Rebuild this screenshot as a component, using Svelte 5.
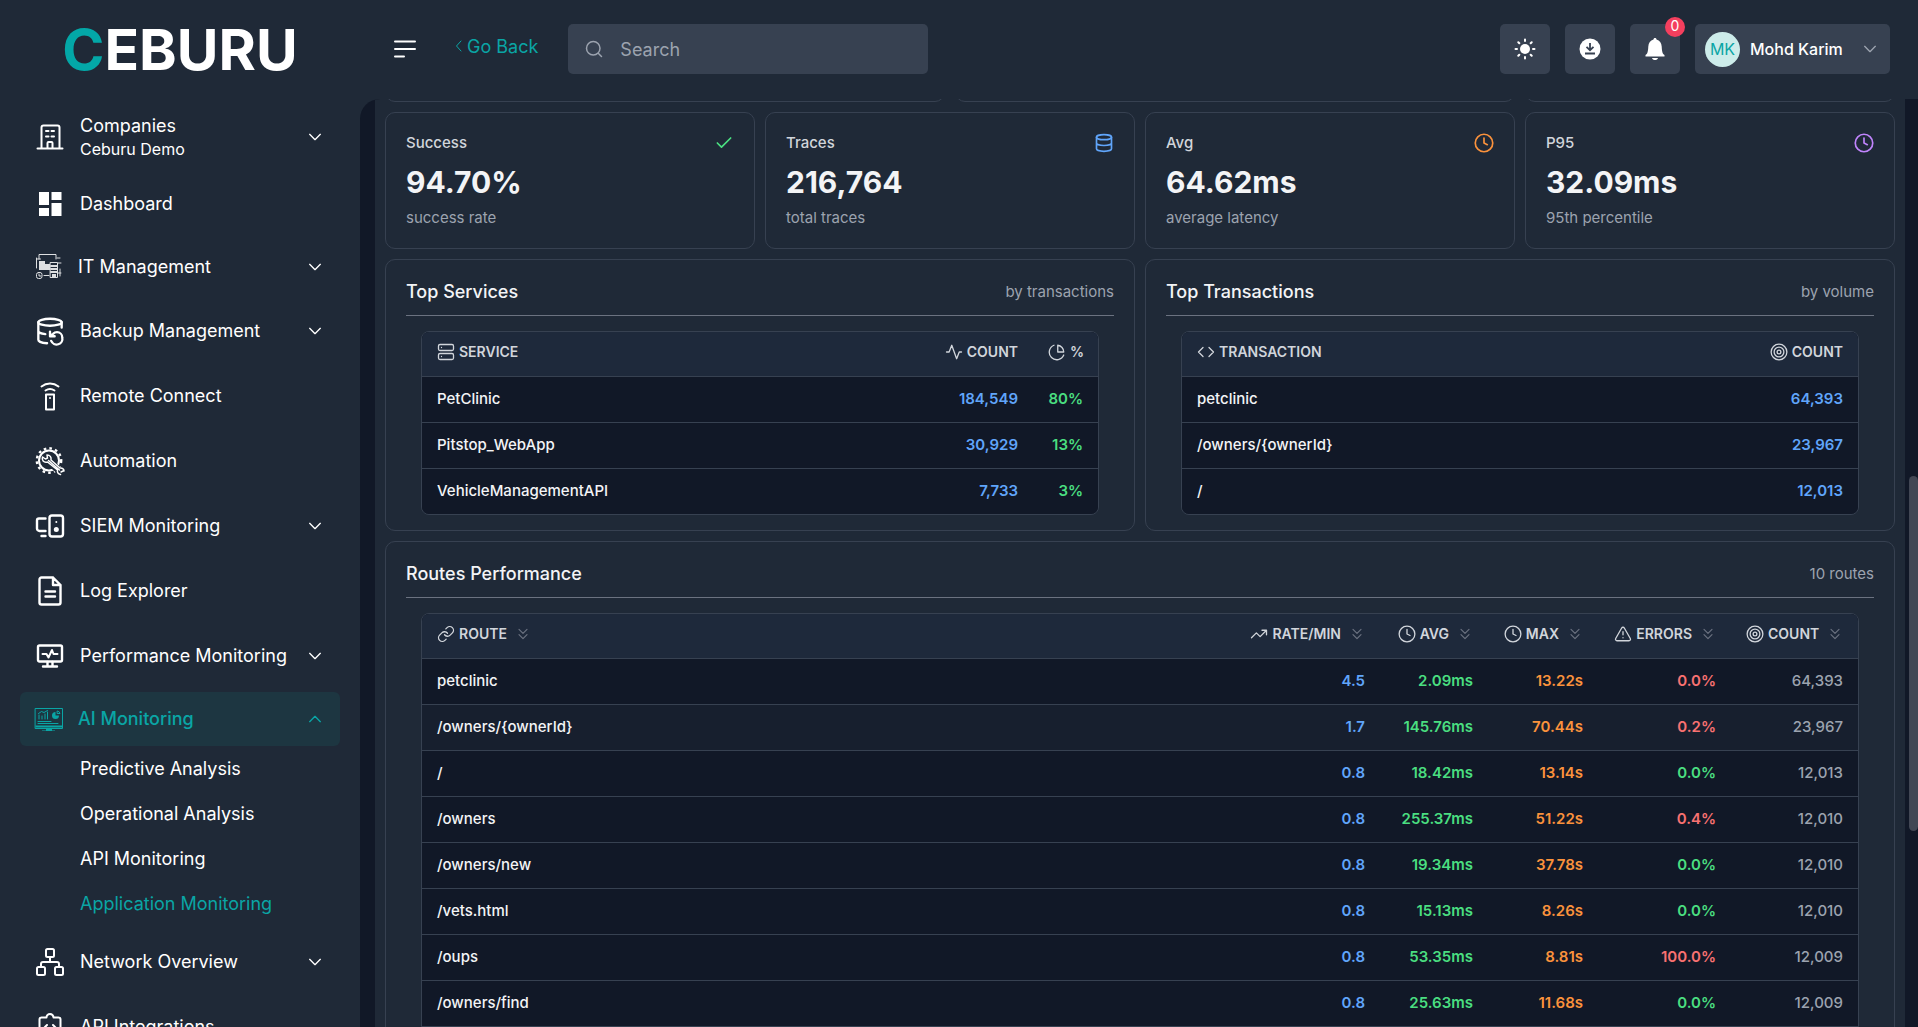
<script lang="ts">
  let search = '';
  let sortKey = '';

  const menu = [
    { label: 'Dashboard', icon: 'dashboard' },
    { label: 'IT Management', icon: 'it', image: true, expandable: true },
    { label: 'Backup Management', icon: 'backup', expandable: true },
    { label: 'Remote Connect', icon: 'remote' },
    { label: 'Automation', icon: 'automation' },
    { label: 'SIEM Monitoring', icon: 'siem', expandable: true },
    { label: 'Log Explorer', icon: 'log' },
    { label: 'Performance Monitoring', icon: 'performance', expandable: true },
    {
      label: 'AI Monitoring', icon: 'ai', image: true, expandable: true, active: true,
      children: ['Predictive Analysis', 'Operational Analysis', 'API Monitoring', 'Application Monitoring']
    },
    { label: 'Network Overview', icon: 'network', expandable: true },
    { label: 'API Integrations', icon: 'api' }
  ];

  const stats = [
    { label: 'Success', value: '94.70%', note: 'success rate', icon: 'check', tone: 'green' },
    { label: 'Traces', value: '216,764', note: 'total traces', icon: 'database', tone: 'blue' },
    { label: 'Avg', value: '64.62ms', note: 'average latency', icon: 'clock', tone: 'orange' },
    { label: 'P95', value: '32.09ms', note: '95th percentile', icon: 'clock', tone: 'purple' }
  ];

  const services = [
    { name: 'PetClinic', count: '184,549', share: '80%' },
    { name: 'Pitstop_WebApp', count: '30,929', share: '13%' },
    { name: 'VehicleManagementAPI', count: '7,733', share: '3%' }
  ];

  const transactions = [
    { name: 'petclinic', count: '64,393' },
    { name: '/owners/{ownerId}', count: '23,967' },
    { name: '/', count: '12,013' }
  ];

  const columns = [
    { key: 'route', label: 'Route', icon: 'link' },
    { key: 'rate', label: 'Rate/min', icon: 'trend' },
    { key: 'avg', label: 'Avg', icon: 'clock' },
    { key: 'max', label: 'Max', icon: 'clock' },
    { key: 'errors', label: 'Errors', icon: 'alert' },
    { key: 'count', label: 'Count', icon: 'target' }
  ];

  const routes = [
    { name: 'petclinic', rate: '4.5', avg: '2.09ms', max: '13.22s', errors: '0.0%', failing: true, count: '64,393' },
    { name: '/owners/{ownerId}', rate: '1.7', avg: '145.76ms', max: '70.44s', errors: '0.2%', failing: true, count: '23,967', highlight: true },
    { name: '/', rate: '0.8', avg: '18.42ms', max: '13.14s', errors: '0.0%', count: '12,013' },
    { name: '/owners', rate: '0.8', avg: '255.37ms', max: '51.22s', errors: '0.4%', failing: true, count: '12,010' },
    { name: '/owners/new', rate: '0.8', avg: '19.34ms', max: '37.78s', errors: '0.0%', count: '12,010' },
    { name: '/vets.html', rate: '0.8', avg: '15.13ms', max: '8.26s', errors: '0.0%', count: '12,010' },
    { name: '/oups', rate: '0.8', avg: '53.35ms', max: '8.81s', errors: '100.0%', failing: true, count: '12,009' },
    { name: '/owners/find', rate: '0.8', avg: '25.63ms', max: '11.68s', errors: '0.0%', count: '12,009' }
  ];

  // 24x24 line icons
  const lineIcons: Record<string, string> = {
    check: '<path d="M20 6 9 17l-5-5"/>',
    database: '<ellipse cx="12" cy="5" rx="9" ry="3"/><path d="M3 5v14a9 3 0 0 0 18 0V5M3 12a9 3 0 0 0 18 0"/>',
    clock: '<circle cx="12" cy="12" r="10.5"/><path d="M12 6v6l4 2"/>',
    server: '<rect x="2" y="2" width="20" height="8" rx="2"/><rect x="2" y="14" width="20" height="8" rx="2"/><path d="M6 6h.01M6 18h.01"/>',
    activity: '<path d="M22 12h-3l-3.500 9L9 3l-3.500 9H2"/>',
    pie: '<path d="M21 12A9 9 0 0 0 13 3v9zM21 16A10 10 0 1 1 8 3"/>',
    code: '<path d="m16 18 6-6-6-6M8 6l-6 6 6 6"/>',
    target: '<circle cx="12" cy="12" r="10.500"/><circle cx="12" cy="12" r="6.500"/><circle cx="12" cy="12" r="2.500"/>',
    link: '<path d="M10 13a5 5 0 0 0 7.540.540l3-3a5 5 0 0 0-7.070-7.070l-1.720 1.710"/><path d="M14 11a5 5 0 0 0-7.540-.540l-3 3a5 5 0 0 0 7.070 7.070l1.710-1.710"/>',
    trend: '<path d="M22 7l-8.500 8.500-5-5L2 17M16 7h6v6"/>',
    alert: '<path d="m21.730 18-8-14a2 2 0 0 0-3.480 0l-8 14A2 2 0 0 0 4 21h16a2 2 0 0 0 1.730-3M12 9v4M12 17h.01"/>',
    sort: '<path d="m6 5 6 6 6-6M6 13l6 6 6-6"/>',
    down: '<path d="m4 8 8 8 8-8"/>',
    up: '<path d="m4 16 8-8 8 8"/>',
    left: '<path d="m16 2-9 10 9 10"/>',
    search: '<circle cx="11" cy="11" r="9"/><path d="m18 18 4 4"/>'
  };

  // 28x28 sidebar icons
  const menuIcons: Record<string, string> = {
    company: '<path d="M5.500 25V4.500a2 2 0 0 1 2-2h14a2 2 0 0 1 2 2V25M1.500 25.500h25M11.500 25v-5a1 1 0 0 1 1-1h3a1 1 0 0 1 1 1v5M10 8h2.500M15.500 8H18M10 13.500h2.500M15.500 13.500H18"/>',
    dashboard: '<path class="solid" d="M3 2h10v13H3zM3 18h10v8H3zM15.500 2h10v8h-10zM15.500 13h10v13h-10z"/>',
    it: '<g stroke-width="1" opacity="0.850"><path d="M4 6V1.500h17V6M1.500 5v10M1.500 6h4M25 5h-3M26 10h-3M26 20h-3M25 23v-7"/><rect class="solid" x="4" y="8" width="6" height="9"/><path class="solid" d="M10 11h5v6h-5z"/><rect x="15.500" y="9.500" width="7" height="15"/><path stroke-width="2" d="M16 13h6M16 16h6M16 19h6"/><path class="solid" d="M17 21h4v3h-4z"/><path d="M9 22.500h5"/><rect x="1.500" y="19.500" width="5.500" height="6" rx="2"/><path d="M4 21v2h2"/></g>',
    backup: '<g transform="scale(1.167)" stroke-width="2"><ellipse cx="12" cy="4.500" rx="10" ry="3"/><path d="M2 12a9 3 0 0 0 6 2.690M22 9V4.500M2 4.500v15a9 3 0 0 0 7.500 3M12 12.500v4h4M13 20.500a5 5 0 0 0 9.500-3 4.500 4.500 0 0 0-4.500-4.500c-1.330 0-2.540.540-3.410 1.410L12 16.500"/></g>',
    remote: '<path d="M5.500 4.500a14 14 0 0 1 17 0M9.500 8.500a8 8 0 0 1 9 0M10 12.500h8v15h-8zM14 16h.01"/>',
    automation: '<g transform="translate(-1 0)"><circle cx="14" cy="13.500" r="10"/><circle cx="14" cy="13.500" r="12.200" stroke-width="2.400" stroke-dasharray="2.600 3.150" stroke-linecap="butt"/><path class="halo" d="M11 12 27 26"/><path stroke-width="1.500" d="M7.500 10c-1 3 1 6 5 5l10 8c-.500 2 .500 4 3 4.500M7.500 10l3 2 2-1-.500-3c3 0 4.500 2 4 5l9 8c2-.500 4 1 4 3M13.500 13.500l11 9.500M28 24l-2 1"/></g>',
    siem: '<path stroke-width="2.400" d="M9.500 6.500H3a2 2 0 0 0-2 2v8a2.500 2.500 0 0 0 2.500 2.500h6M5.500 24h4"/><rect stroke-width="2.400" x="13.500" y="3.500" width="13.500" height="21" rx="2.500"/><path d="M20.300 10h.01"/><circle class="solid" cx="20.300" cy="17.500" r="2.500"/>',
    log: '<path stroke-width="2.400" d="M17 .500H5.500A2 2 0 0 0 3.500 2.500v23a2 2 0 0 0 2 2h17a2 2 0 0 0 2-2V8zM17 .500V8h7.500M9.500 14.500h9.500M9.500 19.500h9.500"/>',
    performance: '<g stroke-width="2.400"><rect x="2" y="3.500" width="24" height="16" rx="1.500"/><path d="M11.500 20v4M16.500 20v4M7 24.500h14"/></g><path d="M6.500 12h4l2 3.500 3.500-7.500 1.500 4h4"/>',
    ai: '<g stroke-width="1"><path d="M.500 3.500h27v20H.500z"/><path class="solid" d="M.500 20.500h27v2H.500zM11 23h6v2.500h3v.500H7v-.500h4z"/><path d="M4 14v-4M7 14v-3M10 14V9M12.500 14V7M3.500 8.500l3-2 2.500 1 3.500-2M3 16.500h13M3 18.500h20"/><path class="solid" d="M20.500 7a3.500 3.500 0 1 0 3.500 3.500h-3.500z"/><path d="M22.500 6a3 3 0 0 1 2.500 2.500h-2.500z"/></g>',
    network: '<rect x="10" y="1" width="8" height="8" rx="1.500"/><rect x="1" y="19" width="8" height="8" rx="1.500"/><rect x="19" y="19" width="8" height="8" rx="1.500"/><path d="M14 9v5M5 19v-3a2 2 0 0 1 2-2h14a2 2 0 0 1 2 2v3"/>',
    api: '<path d="M10.500 4.500h-5a2 2 0 0 0-2 2V28h21V6.500a2 2 0 0 0-2-2h-5a3.500 3.500 0 0 0-7 0zM11 12l-3.500 3.500L11 19M17 12l3.500 3.500L17 19"/>'
  };
</script>

{#snippet line(name: string, size: number)}
  <svg class="line" width={size} height={size} viewBox="0 0 24 24" aria-hidden="true">{@html lineIcons[name]}</svg>
{/snippet}

{#snippet menuIcon(name: string)}
  <svg class="menu-icon" width="28" height="28" viewBox="0 0 28 28" aria-hidden="true">{@html menuIcons[name]}</svg>
{/snippet}

<div class="layout">
  <aside class="sidebar">
    <a class="logo" href="#home"><span>C</span>EBURU</a>

    <nav>
      <button class="item company">
        {@render menuIcon('company')}
        <span class="name">Companies<small>Ceburu Demo</small></span>
        {@render line('down', 16)}
      </button>
      {#each menu as entry}
        <button class="item" class:image={entry.image} class:active={entry.active}>
          {@render menuIcon(entry.icon)}
          <span class="name">{entry.label}</span>
          {#if entry.expandable}
            {@render line(entry.active ? 'up' : 'down', 16)}
          {/if}
        </button>
        {#if entry.children}
          <ul>
            {#each entry.children as child}
              <li><a href="#ai" class:current={child === 'Application Monitoring'}>{child}</a></li>
            {/each}
          </ul>
        {/if}
      {/each}
    </nav>
  </aside>

  <div class="page">
    <header class="topbar">
      <button class="toggle" aria-label="Toggle menu">
        <svg width="24" height="20" viewBox="0 0 24 20"><path d="M2 2.500h20M2 10h20M2 17.500h9" /></svg>
      </button>
      <a class="back" href="#back">{@render line('left', 12)}Go Back</a>
      <label class="search">
        {@render line('search', 18)}
        <input type="text" placeholder="Search" aria-label="Search" bind:value={search} />
      </label>

      <div class="actions">
        <button class="square" aria-label="Theme">
          <svg width="22" height="22" viewBox="0 0 22 22"><circle cx="11" cy="11" r="5" fill="#fff" /><path d="M11 1.500v1.500M11 19v1.500M1.500 11H3M19 11h1.500M4.300 4.300l1 1M16.700 16.700l1 1M4.300 17.700l1-1M16.700 5.300l1-1" stroke="#fff" stroke-width="2" stroke-linecap="round" /></svg>
        </button>
        <button class="square" aria-label="Downloads">
          <svg width="22" height="22" viewBox="0 0 22 22"><circle cx="11" cy="11" r="10.500" fill="#fff" /><path d="M11 5v6.500M7.500 8.800 11 12.200l3.500-3.400M6 15.500h10" fill="none" stroke="#374151" stroke-width="1.800" /></svg>
        </button>
        <button class="square" aria-label="Notifications">
          <svg width="22" height="24" viewBox="0 0 22 24"><path d="M11 1c1 0 1.500.600 1.500 1.500 3.200 1 5 3.500 5.200 7 .200 5 .800 7.500 2.800 8.500v1.500h-19V18c2-1 2.600-3.500 2.800-8.500.200-3.500 2-6 5.200-7C9.500 1.600 10 1 11 1zM8 21h6c-.500 1.500-1.500 2-3 2s-2.500-.500-3-2z" fill="#fff" /></svg>
          <span class="badge">0</span>
        </button>
        <button class="user">
          <span class="avatar">MK</span>
          <span class="username">Mohd Karim</span>
          {@render line('down', 16)}
        </button>
      </div>
    </header>

    <main>
      <div class="content">
        <div class="previous"><div></div><div></div><div></div></div>

        <section class="stats">
          {#each stats as stat}
            <article class="card">
              <div class="stat-head">{stat.label}<span class={stat.tone}>{@render line(stat.icon, 20)}</span></div>
              <strong>{stat.value}</strong>
              <p>{stat.note}</p>
            </article>
          {/each}
        </section>

        <div class="pair">
          <section class="card">
            <div class="card-head"><h2>Top Services</h2><span>by transactions</span></div>
            <div class="table-wrap">
              <table>
                <colgroup><col /><col class="w-count" /><col class="w-share" /></colgroup>
                <thead>
                  <tr>
                    <th><span>{@render line('server', 18)}Service</span></th>
                    <th><span>{@render line('activity', 18)}Count</span></th>
                    <th><span>{@render line('pie', 18)}%</span></th>
                  </tr>
                </thead>
                <tbody>
                  {#each services as row}
                    <tr><td>{row.name}</td><td class="blue">{row.count}</td><td class="green">{row.share}</td></tr>
                  {/each}
                </tbody>
              </table>
            </div>
          </section>

          <section class="card">
            <div class="card-head"><h2>Top Transactions</h2><span>by volume</span></div>
            <div class="table-wrap">
              <table>
                <thead>
                  <tr>
                    <th><span>{@render line('code', 18)}Transaction</span></th>
                    <th><span>{@render line('target', 18)}Count</span></th>
                  </tr>
                </thead>
                <tbody>
                  {#each transactions as row}
                    <tr><td>{row.name}</td><td class="blue">{row.count}</td></tr>
                  {/each}
                </tbody>
              </table>
            </div>
          </section>
        </div>

        <section class="card">
          <div class="card-head"><h2>Routes Performance</h2><span>10 routes</span></div>
          <div class="table-wrap routes">
            <table>
              <colgroup>
                {#each columns as column}<col class="w-{column.key}" />{/each}
              </colgroup>
              <thead>
                <tr>
                  {#each columns as column}
                    <th>
                      <button on:click={() => (sortKey = column.key)}>
                        {@render line(column.icon, 18)}{column.label}
                        <span class="sort" class:sorted={sortKey === column.key}>{@render line('sort', 16)}</span>
                      </button>
                    </th>
                  {/each}
                </tr>
              </thead>
              <tbody>
                {#each routes as row}
                  <tr class:highlight={row.highlight}>
                    <td>{row.name}</td>
                    <td class="blue">{row.rate}</td>
                    <td class="green">{row.avg}</td>
                    <td class="orange">{row.max}</td>
                    <td class={row.failing ? 'red' : 'green'}>{row.errors}</td>
                    <td class="muted">{row.count}</td>
                  </tr>
                {/each}
              </tbody>
            </table>
          </div>
        </section>
      </div>
      <div class="scroll-thumb"></div>
    </main>
  </div>
</div>

<style>
  :global(body) {
    margin: 0;
    background: #1f2937;
    font-family: "Inter", sans-serif;
    overflow: hidden;
  }
  .layout {
    display: flex;
    height: 100vh;
    overflow: hidden;
    color: #fff;
  }
  button {
    font: inherit;
    color: inherit;
    background: none;
    border: none;
    padding: 0;
    cursor: pointer;
  }
  a { text-decoration: none; }
  svg { flex: none; display: block; }
  .line, .menu-icon {
    fill: none;
    stroke: currentColor;
    stroke-width: 2;
    stroke-linecap: round;
    stroke-linejoin: round;
  }
  .menu-icon { overflow: visible; }
  .menu-icon :global(.solid) { fill: currentColor; stroke: none; }
  .menu-icon :global(.halo) { stroke: #1f2937; stroke-width: 7; }

  /* sidebar */
  .sidebar {
    width: 360px;
    flex: none;
    overflow: hidden;
  }
  .logo {
    display: flex;
    justify-content: center;
    height: 98px;
    margin-bottom: 8px;
    align-items: center;
    font-size: 57px;
    font-weight: 700;
    color: #fff;
  }
  .logo span { color: #03a7a7; }
  nav { padding: 0 20px; }
  .item {
    display: flex;
    align-items: center;
    gap: 16px;
    width: 100%;
    height: 57px;
    margin-bottom: 8px;
    padding: 0 17px 0 16px;
    border-radius: 6px;
    font-size: 18px;
    text-align: left;
  }
  .item.company { height: 61px; }
  .item.image { height: 54px; padding-left: 15px; gap: 15px; }
  .item.active {
    margin-bottom: 0;
    background: #1d3641;
    color: #0aa5a5;
    font-weight: 500;
  }
  .name { flex: 1; line-height: 24px; white-space: nowrap; }
  .name small { display: block; font-size: 16px; line-height: 22px; }
  ul { list-style: none; margin: 0; padding: 0 0 7px 60px; }
  li a {
    display: block;
    font-size: 18px;
    line-height: 45px;
    color: #fff;
  }
  li a.current { color: #0aa5a5; }

  /* top bar */
  .page {
    flex: 1;
    min-width: 0;
    display: flex;
    flex-direction: column;
  }
  .topbar {
    display: flex;
    align-items: center;
    height: 98px;
    flex: none;
    padding: 0 28px 1px 33px;
  }
  .toggle svg { stroke: #fff; stroke-width: 2; stroke-linecap: round; }
  .back {
    display: flex;
    align-items: center;
    gap: 2px;
    margin: 0 30px 6px 36px;
    font-size: 18px;
    color: #0aa5a5;
  }
  .search {
    display: flex;
    align-items: center;
    gap: 15px;
    width: 360px;
    height: 50px;
    padding: 0 17px;
    box-sizing: border-box;
    border-radius: 5px;
    background: #374151;
    color: #9ca3af;
  }
  .search input {
    flex: 1;
    min-width: 0;
    border: none;
    outline: none;
    background: none;
    font: inherit;
    font-size: 18px;
    color: #fff;
  }
  .search input::placeholder { color: #9ca3af; opacity: 1; }
  .actions { display: flex; gap: 15px; margin-left: auto; }
  .square {
    position: relative;
    display: grid;
    place-items: center;
    width: 50px;
    height: 50px;
    border-radius: 5px;
    background: #374151;
  }
  .badge {
    position: absolute;
    top: -7px;
    right: -5px;
    width: 20px;
    height: 20px;
    border-radius: 50%;
    background: #f43f5e;
    font-size: 14px;
    line-height: 18px;
    text-align: center;
  }
  .user {
    display: flex;
    align-items: center;
    width: 195px;
    height: 50px;
    padding: 0 12px 0 10px;
    border-radius: 5px;
    background: #374151;
    font-size: 16px;
    font-weight: 500;
  }
  .user .line { color: #9ca3af; }
  .avatar {
    width: 35px;
    height: 35px;
    border-radius: 50%;
    background: #cdecea;
    color: #0aa5a5;
    font-weight: 400;
    line-height: 35px;
    text-align: center;
  }
  .username { flex: 1; margin-left: 10px; text-align: left; }

  /* content */
  main {
    flex: 1;
    min-height: 0;
    overflow: hidden;
    padding: 0 13px 0 15px;
    background: #111827;
    border-top-left-radius: 20px;
  }
  .content {
    display: flex;
    flex-direction: column;
    gap: 10px;
    padding: 0 10px;
    background: #1f2937;
  }
  .scroll-thumb {
    position: fixed;
    right: 0;
    top: 46.3%;
    width: 9px;
    height: 34.6%;
    border-radius: 5px;
    background: #424754;
  }
  /* bottom edge of the cards scrolled under the top bar */
  .previous {
    display: flex;
    gap: 10px;
    height: 3px;
    overflow: hidden;
    align-items: flex-end;
  }
  .previous div {
    flex: 56;
    height: 20px;
    border: 1px solid #374151;
    border-radius: 10px;
  }
  .previous div:last-child { flex: 37; }
  .card {
    padding: 20px;
    border: 1px solid #374151;
    border-radius: 10px;
  }
  .stats {
    display: grid;
    grid-template-columns: repeat(4, 1fr);
    gap: 10px;
  }
  .stat-head {
    display: flex;
    align-items: center;
    justify-content: space-between;
    font-size: 15px;
    font-weight: 500;
    line-height: 20px;
    color: #d1d5db;
  }
  .stats strong {
    display: block;
    margin: 8px 0 5px;
    font-size: 30px;
    font-weight: 700;
    line-height: 42px;
    color: #f3f4f6;
  }
  .stats p {
    margin: 0;
    font-size: 15px;
    line-height: 20px;
    color: #9ca3af;
  }
  .pair {
    display: grid;
    grid-template-columns: 1fr 1fr;
    gap: 10px;
  }
  .card-head {
    display: flex;
    justify-content: space-between;
    align-items: center;
    padding-bottom: 11px;
    border-bottom: 1px solid #6b7280;
    font-size: 15px;
    line-height: 24px;
    color: #9ca3af;
  }
  h2 {
    margin: 0;
    font-size: 18px;
    font-weight: 500;
    color: #f3f4f6;
  }
  .pair .card, .content > .card { padding-bottom: 15px; }
  .table-wrap {
    margin: 15px 15px 0;
    border: 1px solid #374151;
    border-radius: 8px;
    overflow: hidden;
  }
  table {
    width: 100%;
    border-spacing: 0;
    table-layout: fixed;
    background: #111827;
    font-size: 15px;
    line-height: 20px;
  }
  .w-count { width: 127px; }
  .w-share { width: 65px; }
  .w-rate { width: 155px; }
  .w-avg { width: 108px; }
  .w-max { width: 110px; }
  .w-errors { width: 133px; }
  th {
    padding: 10px 15px 14px;
    border-bottom: 1px solid #374151;
    background: #1e293b;
    color: #d1d5db;
    font-size: 14px;
    font-weight: 600;
    text-align: right;
    text-transform: uppercase;
    white-space: nowrap;
  }
  th > span, th button {
    display: inline-flex;
    align-items: center;
    gap: 4px;
    text-transform: inherit;
    vertical-align: top;
  }
  th .line { stroke-width: 1.75; }
  .sort { margin-left: 4px; color: #6b7280; }
  .sorted { color: #60a5fa; }
  td {
    padding: 12px 15px 13px;
    border-bottom: 1px solid #374151;
    font-weight: 600;
    text-align: right;
  }
  th:first-child, td:first-child { text-align: left; }
  td:first-child { font-weight: 500; color: #f3f4f6; }
  .pair tbody tr:last-child td { border-bottom: none; }
  /* the list keeps going past the fold */
  .routes { padding-bottom: 92px; }
  .highlight td { background: #171f2e; }
  .green { color: #4ade80; }
  .blue { color: #60a5fa; }
  .orange { color: #fb923c; }
  .purple { color: #c084fc; }
  .red { color: #f87171; }
  td.muted { color: #9ca3af; font-weight: 500; }
</style>
